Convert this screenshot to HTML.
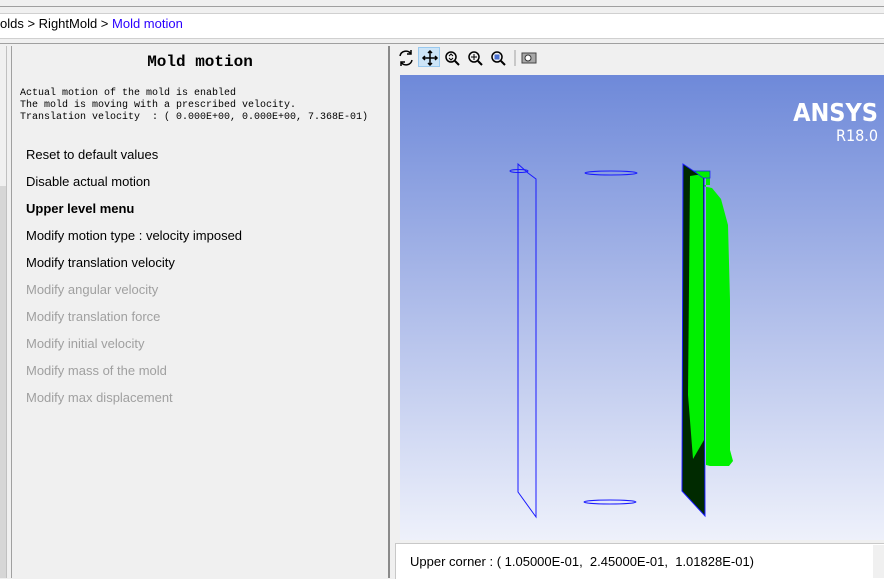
<!DOCTYPE html>
<html><head><style>
body{margin:0;width:884px;height:578px;background:#f0f0f0;position:relative;overflow:hidden;font-family:"Liberation Sans",sans-serif}
.a{position:absolute}
.mono{font-family:"Liberation Mono",monospace}
.item{position:absolute;left:26px;font-size:13px;color:#000}
.dis{color:#a0a0a0}
</style></head><body>
<div class="a" style="left:0;top:6px;width:884px;height:1px;background:#a0a0a0"></div>
<div class="a" style="left:0;top:13px;width:884px;height:24px;background:#fff;border-top:1px solid #d0d0d0;border-bottom:1px solid #d0d0d0"></div>
<div class="a" style="left:0;top:16px;font-size:13px;color:#000">olds &gt; RightMold &gt; <span style="color:#2a00ff">Mold motion</span></div>
<div class="a" style="left:0;top:43px;width:884px;height:1px;background:#a0a0a0"></div>
<div class="a" style="left:0;top:46px;width:6px;height:532px;background:#f0f0f0;border-right:1px solid #c0c0c0"></div>
<div class="a" style="left:0;top:186px;width:6px;height:392px;background:#d6d6d6"></div>
<div class="a" style="left:11px;top:46px;width:1px;height:532px;background:#a0a0a0"></div>
<div class="a" style="left:388px;top:46px;width:2px;height:532px;background:#8a8a8a"></div>
<div class="a mono" style="left:12px;width:376px;top:53px;text-align:center;font-size:16px;font-weight:bold">Mold motion</div>
<div class="a mono" style="left:20px;top:88px;font-size:10px;line-height:12px;white-space:pre">Actual motion of the mold is enabled
The mold is moving with a prescribed velocity.
Translation velocity  : ( 0.000E+00, 0.000E+00, 7.368E-01)</div>
<div class="item" style="top:147px">Reset to default values</div>
<div class="item" style="top:174px">Disable actual motion</div>
<div class="item" style="top:201px;font-weight:bold">Upper level menu</div>
<div class="item" style="top:228px">Modify motion type : velocity imposed</div>
<div class="item" style="top:255px">Modify translation velocity</div>
<div class="item dis" style="top:282px">Modify angular velocity</div>
<div class="item dis" style="top:309px">Modify translation force</div>
<div class="item dis" style="top:336px">Modify initial velocity</div>
<div class="item dis" style="top:363px">Modify mass of the mold</div>
<div class="item dis" style="top:390px">Modify max displacement</div>
<div class="a" style="left:418px;top:47px;width:22px;height:20px;background:#cce4f7;border:1px solid #99c9ef;box-sizing:border-box"></div>
<svg class="a" style="left:396px;top:47px" width="145" height="22" viewBox="0 0 145 22" fill="none" stroke="#000" stroke-width="1.5">
<path d="M4 9a6 6 0 0 1 11-2M16 13a6 6 0 0 1-11 2"/><path d="M15 3v4h-4M5 19v-4h4" />
<path d="M34 4v14M27 11h14M32 6l2-2 2 2M32 16l2 2 2-2M29 9l-2 2 2 2M39 9l2 2-2 2"/>
<circle cx="55" cy="10" r="5"/><path d="M59 14l4 4" stroke-width="2"/><path d="M53 9l2-2 2 2M53 11l2 2 2-2" stroke-width="1"/>
<circle cx="78" cy="10" r="5"/><path d="M82 14l4 4" stroke-width="2"/><path d="M75 10h6M78 7v6" stroke-width="1"/>
<circle cx="101" cy="10" r="5"/><path d="M105 14l4 4" stroke-width="2"/><rect x="98.5" y="7.5" width="5" height="5" fill="#4a70d0" stroke="none"/>
<path d="M119 3v16" stroke="#a0a0a0" stroke-width="1"/>
<rect x="126" y="6" width="14" height="10" fill="#a8a8a8" stroke="#444" stroke-width="1"/><circle cx="132" cy="11" r="3" fill="#fff" stroke="#333" stroke-width="1"/>
</svg>
<div class="a" style="left:400px;top:75px;width:484px;height:465px;background:linear-gradient(#6e89d9,#a9b8e8 45%,#eef1fb)"></div>
<div class="a" style="right:6px;top:98px;font-size:25px;font-weight:bold;color:#fff;font-family:'DejaVu Sans Condensed','Liberation Sans Narrow',sans-serif">ANSYS</div>
<div class="a" style="right:6px;top:126px;font-size:16px;color:#fff;font-family:'DejaVu Sans Condensed',sans-serif">R18.0</div>
<svg class="a" style="left:400px;top:75px" width="484" height="465" viewBox="400 75 484 465">
<g fill="none" stroke="#1a1aff" stroke-width="1">
<path d="M518 164L518 492L536 517L536 179L528 173L518 164Z"/>
<ellipse cx="519" cy="171" rx="9" ry="1.5"/>
<ellipse cx="611" cy="173" rx="26" ry="2"/>
<ellipse cx="610" cy="502" rx="26" ry="2"/>
</g>
<path d="M697 185L712 188L721 199L728 225L730 300L730 450L733 461L729 466L710 466L706 465L706 172L710 172L710 185Z" fill="#00f000"/>
<path d="M683 164L704 178L705 516L682 491Z" fill="#002a00" stroke="#1a1aff" stroke-width="1"/>
<path d="M690 176L703 174L704 440L693 459L688 395Z" fill="#00f000"/>
<path d="M694 171L710 171L710 178L703 178Z" fill="#00f000" stroke="#1a1aff" stroke-width="0.7"/>
</svg>
<div class="a" style="left:395px;top:543px;width:489px;height:35px;background:#fff;border-top:1px solid #c8c8c8;border-left:1px solid #c8c8c8"></div>
<div class="a" style="left:410px;top:554px;font-size:13px">Upper corner : ( 1.05000E-01,&nbsp; 2.45000E-01,&nbsp; 1.01828E-01)</div>
<div class="a" style="left:873px;top:545px;width:11px;height:33px;background:#f0f0f0"></div>
</body></html>
